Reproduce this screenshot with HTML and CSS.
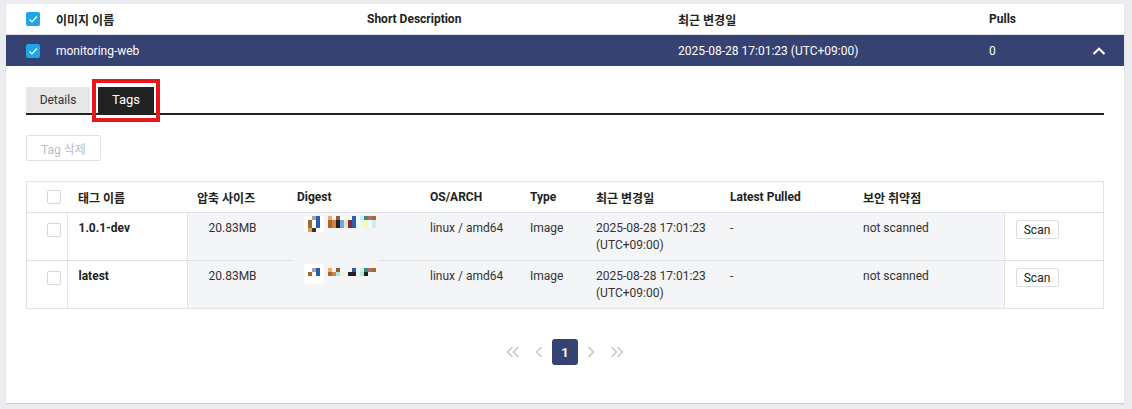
FILE: index.html
```html
<!DOCTYPE html>
<html lang="ko">
<head>
  <meta charset="UTF-8">
  <title>monitoring-web</title>
  <link rel="stylesheet" href="styles.css">
</head>
<body>
  <div class="card">
    <div class="repo-head">
      <span class="check on"></span>
      <span>이미지 이름</span>
      <span>Short Description</span>
      <span>최근 변경일</span>
      <span>Pulls</span>
      <span></span>
    </div>
    <div class="repo-row">
      <span class="check on"></span>
      <span>monitoring-web</span>
      <span></span>
      <span>2025-08-28 17:01:23 (UTC+09:00)</span>
      <span>0</span>
      <span class="chevron">
        <svg width="14" height="8" viewBox="0 0 14 8"><polyline points="1.5,7 7,1.8 12.5,7" fill="none" stroke="#fff" stroke-width="2.2"/></svg>
      </span>
    </div>

    <div class="detail">
      <div class="tabs">
        <div class="tab">Details</div>
        <div class="tab active">Tags</div>
      </div>

      <button class="btn-delete" disabled>Tag 삭제</button>

      <table class="tags">
        <thead>
          <tr>
            <th class="c-check"><span class="check"></span></th>
            <th class="c-name">태그 이름</th>
            <th class="c-size">압축 사이즈</th>
            <th class="c-digest">Digest</th>
            <th class="c-os">OS/ARCH</th>
            <th class="c-type">Type</th>
            <th class="c-date">최근 변경일</th>
            <th class="c-pulled">Latest Pulled</th>
            <th class="c-sec">보안 취약점</th>
            <th class="c-scan"></th>
          </tr>
        </thead>
        <tbody>
          <tr>
            <td class="c-check"><span class="check"></span></td>
            <td class="c-name"><b>1.0.1-dev</b></td>
            <td class="c-size">20.83MB</td>
            <td class="c-digest gap">
              <svg width="76" height="16" viewBox="0 0 76 16">
                <rect x="0" y="0" width="20" height="16" fill="#fff"/>
                <rect x="8" y="0" width="4" height="4" fill="#a3a3a3"/>
                <rect x="12" y="0" width="4" height="12" fill="#2a5fad"/>
                <rect x="4" y="4" width="4" height="8" fill="#b0662a"/>
                <rect x="4" y="12" width="4" height="4" fill="#e0a060"/>
                <rect x="8" y="12" width="4" height="4" fill="#333"/>
                <rect x="24" y="0" width="4" height="4" fill="#f0a868"/>
                <rect x="32" y="0" width="4" height="4" fill="#905a3c"/>
                <rect x="48" y="0" width="4" height="4" fill="#2a5fad"/>
                <rect x="24" y="4" width="4" height="8" fill="#b06428"/>
                <rect x="28" y="4" width="4" height="8" fill="#d08444"/>
                <rect x="32" y="4" width="4" height="8" fill="#222"/>
                <rect x="36" y="4" width="4" height="8" fill="#6aa8f0"/>
                <rect x="40" y="4" width="4" height="8" fill="#f0e0c0"/>
                <rect x="44" y="4" width="4" height="8" fill="#7a3040"/>
                <rect x="48" y="4" width="4" height="8" fill="#2a5fad"/>
                <rect x="56" y="0" width="4" height="4" fill="#c8f0f0"/>
                <rect x="60" y="0" width="4" height="4" fill="#3a8a80"/>
                <rect x="64" y="0" width="4" height="4" fill="#a07080"/>
                <rect x="68" y="0" width="4" height="4" fill="#b06428"/>
                <rect x="56" y="4" width="4" height="8" fill="#e8f8f8"/>
                <rect x="60" y="4" width="4" height="8" fill="#f8f8b0"/>
                <rect x="64" y="4" width="4" height="8" fill="#f0f8f8"/>
                <rect x="68" y="4" width="4" height="8" fill="#c8f0f8"/>
              </svg>
            </td>
            <td class="c-os">linux / amd64</td>
            <td class="c-type">Image</td>
            <td class="c-date">2025-08-28 17:01:23<br>(UTC+09:00)</td>
            <td class="c-pulled">-</td>
            <td class="c-sec">not scanned</td>
            <td class="c-scan"><button class="btn-scan">Scan</button></td>
          </tr>
          <tr>
            <td class="c-check"><span class="check"></span></td>
            <td class="c-name"><b>latest</b></td>
            <td class="c-size">20.83MB</td>
            <td class="c-digest">
              <svg width="76" height="20" viewBox="0 0 76 20">
                <rect x="0" y="0" width="20" height="20" fill="#fff"/>
                <rect x="8" y="4" width="4" height="4" fill="#a3a3a3"/>
                <rect x="12" y="4" width="4" height="8" fill="#2a5fad"/>
                <rect x="4" y="8" width="4" height="4" fill="#b0662a"/>
                <rect x="24" y="4" width="4" height="4" fill="#f0a868"/>
                <rect x="32" y="4" width="4" height="4" fill="#905a3c"/>
                <rect x="48" y="4" width="4" height="4" fill="#2a5fad"/>
                <rect x="24" y="8" width="4" height="4" fill="#b06428"/>
                <rect x="28" y="8" width="4" height="4" fill="#d08444"/>
                <rect x="32" y="8" width="4" height="4" fill="#a0e8f0"/>
                <rect x="36" y="8" width="4" height="4" fill="#f8f4c8"/>
                <rect x="44" y="8" width="8" height="4" fill="#222"/>
                <rect x="56" y="4" width="4" height="4" fill="#c8f0f0"/>
                <rect x="60" y="4" width="4" height="4" fill="#3a8a80"/>
                <rect x="64" y="4" width="4" height="4" fill="#a07080"/>
                <rect x="68" y="4" width="4" height="4" fill="#b06428"/>
                <rect x="56" y="8" width="4" height="4" fill="#a8f0d0"/>
                <rect x="60" y="8" width="4" height="4" fill="#222"/>
              </svg>
            </td>
            <td class="c-os">linux / amd64</td>
            <td class="c-type">Image</td>
            <td class="c-date">2025-08-28 17:01:23<br>(UTC+09:00)</td>
            <td class="c-pulled">-</td>
            <td class="c-sec">not scanned</td>
            <td class="c-scan"><button class="btn-scan">Scan</button></td>
          </tr>
        </tbody>
      </table>

      <div class="pager">
        <span class="pg">
          <svg width="14" height="12" viewBox="0 0 14 12"><polyline points="6.5,1 1.5,6 6.5,11" fill="none" stroke="#c5c9d0" stroke-width="1.6"/><polyline points="12.5,1 7.5,6 12.5,11" fill="none" stroke="#c5c9d0" stroke-width="1.6"/></svg>
        </span>
        <span class="pg">
          <svg width="8" height="12" viewBox="0 0 8 12"><polyline points="6.5,1 1.5,6 6.5,11" fill="none" stroke="#c5c9d0" stroke-width="1.6"/></svg>
        </span>
        <span class="pg current">1</span>
        <span class="pg">
          <svg width="8" height="12" viewBox="0 0 8 12"><polyline points="1.5,1 6.5,6 1.5,11" fill="none" stroke="#c5c9d0" stroke-width="1.6"/></svg>
        </span>
        <span class="pg">
          <svg width="14" height="12" viewBox="0 0 14 12"><polyline points="1.5,1 6.5,6 1.5,11" fill="none" stroke="#c5c9d0" stroke-width="1.6"/><polyline points="7.5,1 12.5,6 7.5,11" fill="none" stroke="#c5c9d0" stroke-width="1.6"/></svg>
        </span>
      </div>
    </div>
  </div>
</body>
</html>
```

FILE: styles.css
```css
body {
  margin: 0;
  background: #ebecef;
  font-family: Roboto, "Noto Sans CJK KR", sans-serif;
  font-size: 12px;
  color: #222;
}

.card {
  margin: 4px 8px 6px 6px;
  height: 399px;
  background: #fff;
  box-shadow: 0 1px 1px rgba(0, 0, 0, 0.12);
}

.repo-head,
.repo-row {
  display: grid;
  grid-template-columns: 30px 311px 311px 311px 1fr 30px;
  align-items: center;
  padding-left: 20px;
  padding-right: 10px;
}

.repo-head {
  height: 30px;
  font-weight: bold;
  border-bottom: 1px solid #dfe1e6;
}

.repo-row {
  height: 31px;
  background: #364372;
  color: #fff;
  font-size: 12px;
}

.chevron {
  display: flex;
  justify-content: center;
}

.check {
  display: inline-block;
  width: 14px;
  height: 14px;
  border: 1px solid #d4d7dc;
  border-radius: 2px;
  background: #fff;
  box-sizing: border-box;
  vertical-align: middle;
}

.check.on {
  border: none;
  background: #1ea7e8 url("data:image/svg+xml;utf8,<svg xmlns='http://www.w3.org/2000/svg' width='14' height='14'><polyline points='3.5,7.5 6,10 11,4.5' fill='none' stroke='white' stroke-width='1.2'/></svg>") no-repeat center;
}

.detail {
  padding: 21px 20px 0 20px;
}

.tabs {
  display: flex;
  gap: 8px;
  border-bottom: 2px solid #222;
}

.tab {
  width: 64px;
  height: 26px;
  line-height: 26px;
  text-align: center;
  background: #e7e7e7;
  font-size: 12px;
  color: #333;
}

.tab.active {
  position: relative;
  width: 56px;
  background: #222;
  color: #fff;
  font-size: 13px;
}

.tab.active::after {
  content: "";
  position: absolute;
  top: -8px;
  left: -6px;
  right: -6px;
  bottom: -9px;
  border: 4px solid #e8161e;
}

.btn-delete {
  display: block;
  margin-top: 20px;
  width: 75px;
  height: 26px;
  background: #fff;
  border: 1px solid #dfe2e8;
  border-radius: 2px;
  color: #b9bdc5;
  font-family: inherit;
  font-size: 12px;
}

.tags {
  margin-top: 20px;
  width: 100%;
  border-collapse: collapse;
  table-layout: fixed;
  border: 1px solid #e1e3e7;
}

.tags th {
  height: 30px;
  padding: 0 11px;
  text-align: left;
  font-weight: bold;
  border-bottom: 1px solid #dcdee3;
}

.tags td {
  height: 34px;
  padding: 7px 11px 6px 11px;
  line-height: 17px;
  vertical-align: top;
  background: #f4f5f7;
  color: #333;
  border-bottom: 1px solid #dcdee3;
}

.tags tbody tr:last-child td {
  border-bottom: none;
}

.tags .c-check {
  width: 20px;
  padding: 0 0 0 20px;
  text-align: left;
}

.tags td.c-check {
  padding-top: 8px;
  background: #fff;
  border-right: 1px solid #e1e3e7;
}

.tags .c-name {
  width: 98px;
}

.tags td.c-name {
  background: #fff;
  border-right: 1px solid #e1e3e7;
}

.tags td.c-name b {
  color: #222;
}

.tags .c-size {
  width: 79px;
  padding-left: 10px;
}

.tags td.c-size {
  padding-left: 21px;
  padding-right: 0;
}

.tags .c-digest {
  width: 111px;
}

.tags th.c-digest {
  padding-left: 10px;
}

.tags td.c-digest {
  padding: 3px 0 0 17px;
}

.tags td.c-digest.gap {
  position: relative;
  border-bottom: none;
}

.tags td.c-digest.gap::after,
.tags td.c-digest.gap::before {
  content: "";
  position: absolute;
  bottom: 0;
  border-bottom: 1px solid #dcdee3;
}

.tags td.c-digest.gap::after {
  left: 0;
  width: 6px;
}

.tags td.c-digest.gap::before {
  right: 0;
  width: 40px;
}

.tags td.c-digest svg {
  display: block;
}

.tags .c-os {
  width: 78px;
}

.tags .c-type {
  width: 44px;
}

.tags .c-date {
  width: 112px;
}

.tags .c-pulled {
  width: 111px;
}

.tags .c-sec {
  width: 130px;
}

.tags td.c-scan {
  background: #fff;
  border-left: 1px solid #e1e3e7;
}

.btn-scan {
  width: 43px;
  height: 19px;
  margin-top: 0;
  padding: 0;
  background: #fff;
  border: 1px solid #dcdee3;
  border-radius: 2px;
  font-family: inherit;
  font-size: 12px;
  color: #222;
}

.pager {
  display: flex;
  justify-content: center;
  margin-top: 30px;
}

.pg {
  width: 26px;
  height: 26px;
  display: flex;
  align-items: center;
  justify-content: center;
}

.pg.current {
  background: #364372;
  color: #fff;
  border-radius: 3px;
  font-size: 13px;
  font-weight: bold;
}
```
